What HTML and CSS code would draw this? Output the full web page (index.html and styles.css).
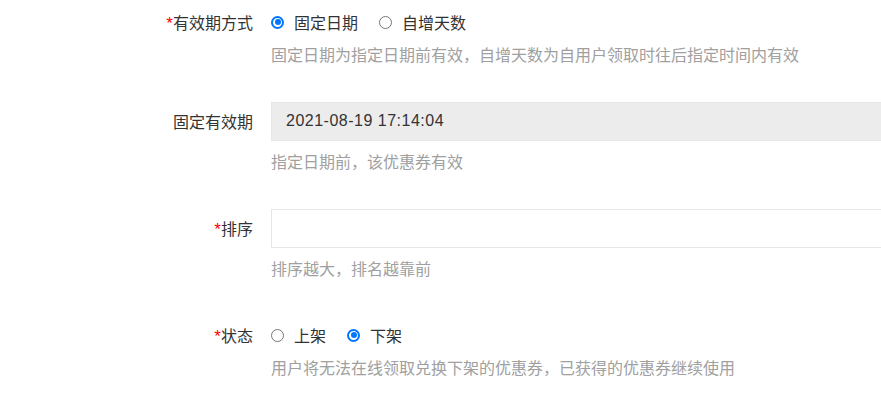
FILE: index.html
```html
<!DOCTYPE html>
<html>
<head lang="zh">
    <meta charset="UTF-8">
    <title>优惠券设置</title>
    <link rel="stylesheet" href="styles.css">
</head>
<body>
    <div class="form">
        <!--有效期方式-->
        <div class="item">
            <div class="line">
                <label class="label"><i>*</i>有效期方式</label>
                <div class="field">
                    <span class="radio checked"><b></b>固定日期</span>
                    <span class="radio"><b></b>自增天数</span>
                </div>
            </div>
            <p class="help">固定日期为指定日期前有效，自增天数为自用户领取时往后指定时间内有效</p>
        </div>

        <!--固定有效期-->
        <div class="item">
            <div class="line">
                <label class="label">固定有效期</label>
                <div class="field">
                    <input class="input disabled" type="text" value="2021-08-19 17:14:04" disabled>
                </div>
            </div>
            <p class="help help-input">指定日期前，该优惠券有效</p>
        </div>

        <!--排序-->
        <div class="item">
            <div class="line">
                <label class="label"><i>*</i>排序</label>
                <div class="field">
                    <input class="input" type="text" value="">
                </div>
            </div>
            <p class="help help-input">排序越大，排名越靠前</p>
        </div>

        <!--状态-->
        <div class="item">
            <div class="line">
                <label class="label"><i>*</i>状态</label>
                <div class="field">
                    <span class="radio"><b></b>上架</span>
                    <span class="radio checked"><b></b>下架</span>
                </div>
            </div>
            <p class="help">用户将无法在线领取兑换下架的优惠券，已获得的优惠券继续使用</p>
        </div>
    </div>
</body>
</html>
```

FILE: styles.css
```css
* {
    padding: 0;
    margin: 0;
    border: 0;
    box-sizing: border-box;
}

body {
    background: #fff;
    overflow: hidden;
    font-family: "Liberation Sans", "Noto Sans CJK SC", sans-serif;
    font-size: 16px;
    color: #333;
}

.form {
    padding-top: 2px;
    width: 1100px;
}

.item {
    margin-bottom: 35px;
}

.line {
    display: flex;
    align-items: center;
    height: 40px;
}

.label {
    width: 271px;
    padding-right: 18px;
    text-align: right;
    flex-shrink: 0;
}

.label i {
    font-style: normal;
    font-size: 17px;
    color: #f00;
}

.field {
    flex: 1;
    display: flex;
    align-items: center;
}

.radio {
    display: flex;
    align-items: center;
    margin-right: 21px;
}

.radio b {
    width: 13px;
    height: 13px;
    border: 1px solid #767676;
    border-radius: 50%;
    margin-right: 10px;
    position: relative;
}

.radio.checked b {
    border: 2px solid #0075ff;
}

.radio.checked b:after {
    content: "";
    position: absolute;
    left: 1.5px;
    top: 1.5px;
    width: 6px;
    height: 6px;
    border-radius: 50%;
    background: #0075ff;
}

.input {
    width: 700px;
    height: 39px;
    border: 1px solid #e6e6e6;
    background: #fff;
    padding: 0 14px;
    font-family: inherit;
    font-size: 16px;
    letter-spacing: 0.5px;
    color: #333;
    outline: none;
}

.input.disabled {
    background: #ececec;
    border-color: #e6e6e6;
}

.help {
    margin-top: 4px;
    padding-left: 271px;
    line-height: 20px;
    color: #a0a0a0;
}

.help-input {
    margin-top: 12px;
}
```
